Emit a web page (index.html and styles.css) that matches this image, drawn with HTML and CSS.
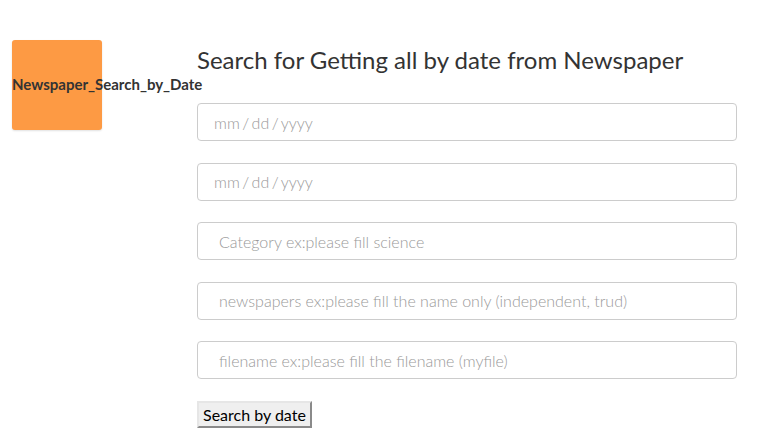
FILE: index.html
```html
<!DOCTYPE html>
<html>
<head>
<meta charset="utf-8">
<link rel="stylesheet" href="styles.css">
</head>
<body>
<div class="page">
  <aside class="sidebar">
    <div class="logo"><span class="logo-text">Newspaper_Search_by_Date</span></div>
  </aside>
  <main class="main">
    <h1 class="title">Search for Getting all by date from Newspaper</h1>
    <form class="form">
      <input class="field field-date" type="text" placeholder="mm / dd / yyyy">
      <input class="field field-date" type="text" placeholder="mm / dd / yyyy">
      <input class="field" type="text" placeholder="Category ex:please fill science">
      <input class="field" type="text" placeholder="newspapers ex:please fill the name only (independent, trud)">
      <input class="field" type="text" placeholder="filename ex:please fill the filename (myfile)">
      <div class="actions"><button class="btn" type="button">Search by date</button></div>
    </form>
  </main>
</div>
</body>
</html>
```

FILE: styles.css
```css
* { box-sizing: border-box; }
html, body { margin: 0; padding: 0; background: #fff; }
body { font-family: Lato, "Open Sans", sans-serif; color: #333; }
.page { display: flex; align-items: flex-start; }
.sidebar { width: 197px; flex: none; padding: 40px 0 0 12px; }
.logo {
  width: 90px; height: 90px; background: #fd9a44; border-radius: 3px;
  display: flex; align-items: center; white-space: nowrap;
  box-shadow: 0 1px 2px rgba(0,0,0,0.12);
}
.logo-text { font-size: 15px; font-weight: 700; color: #333; margin-top: -2px; }
.main { width: 540px; padding-top: 44px; }
.title { font-size: 24px; font-weight: 400; margin: 0 0 27px; line-height: 32px; color: #333; }
.form { display: flex; flex-direction: column; gap: 21.5px; }
.field {
  width: 540px; height: 38px; border: 1px solid #ccc; border-radius: 4px;
  padding: 0 21px; font-family: Lato, sans-serif; font-size: 16px; font-weight: 300; color: #555;
  outline: none;
}
.field-date { padding-left: 16px; }
.field::placeholder { color: #999; font-weight: 300; }
.field-date::placeholder { word-spacing: -1.9px; }
.actions { padding-top: 0; }
.btn {
  font-family: Lato, sans-serif; font-size: 16px; color: #000;
  background: #efefef; border: 2px solid; border-color: #e6e6e6 #8a8a8a #8a8a8a #e6e6e6;
  padding: 0 4px; height: 27px; line-height: 21px;
}
```
